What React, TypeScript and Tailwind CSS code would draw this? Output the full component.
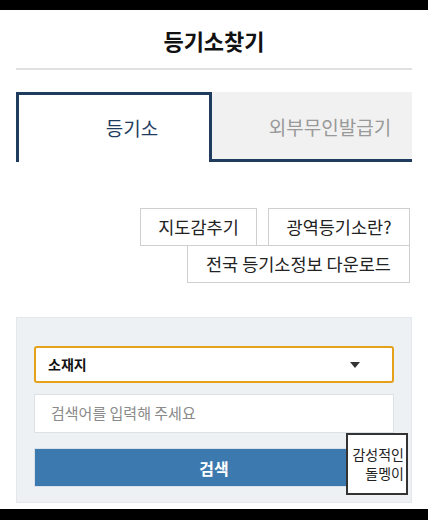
import React from 'react';

const font = { fontFamily: '"Noto Sans CJK KR", "Noto Sans", sans-serif' };

export default function App() {
  const [tab, setTab] = React.useState('office');

  return (
    <div className="w-[428px] h-[520px] bg-white flex flex-col overflow-hidden" style={font}>
      <div className="h-[10px] bg-black shrink-0" />

      {/* Header */}
      <div className="mx-4 h-[60px] flex items-center justify-center pt-[3px] border-b-2 border-[#e0e0e0]">
        <h1 className="text-[22px] font-bold text-[#111]">등기소찾기</h1>
      </div>

      {/* Tabs */}
      <div className="mx-4 mt-[22px] flex h-[70px]">
        <button
          onClick={() => setTab('office')}
          className="w-[196px] h-full border-t-[3px] border-l-[3px] border-r-[3px] border-[#1f3c5e] bg-white flex items-center justify-center pl-9 text-[19px] text-[#1f3c5e]"
        >
          등기소
        </button>
        <button
          onClick={() => setTab('kiosk')}
          className="flex-1 h-full bg-[#f1f1f1] border-b-[3px] border-[#1f3c5e] flex items-center justify-center pl-9 pt-[3px] text-[19px] text-[#999]"
        >
          외부무인발급기
        </button>
      </div>

      {/* Action buttons */}
      <div className="mt-[46px] mr-[18px] flex flex-col items-end">
        <div className="flex gap-[11px]">
          <button className="h-[38px] w-[117px] border border-[#cfcfcf] text-[17.5px] text-[#222] flex items-center justify-center">
            지도감추기
          </button>
          <button className="h-[38px] w-[142px] border border-[#cfcfcf] text-[17.5px] text-[#222] flex items-center justify-center">
            광역등기소란?
          </button>
        </div>
        <button className="-mt-px h-[38px] w-[223px] border border-[#cfcfcf] text-[17.5px] text-[#222] flex items-center justify-center">
          전국 등기소정보 다운로드
        </button>
      </div>

      {/* Search panel */}
      <div className="relative mx-4 mt-[34px] h-[186px] bg-[#edf1f4] border border-[#e4e8ec] px-[17px] pt-[28px]">
        <div className="h-[37px] bg-white border-2 border-[#e5a11a] rounded-[3px] flex items-center justify-between pl-3 pr-8">
          <span className="text-[14px] font-bold text-[#111]">소재지</span>
          <svg width="10" height="6" viewBox="0 0 10 6">
            <path d="M0 0h10L5 6z" fill="#333" />
          </svg>
        </div>
        <div className="mt-[11px] h-[39px] bg-white border border-[#dde2e7] flex items-center pl-4">
          <span className="text-[15px] text-[#8a8a8a]">검색어를 입력해 주세요</span>
        </div>
        <button className="mt-[15px] w-full h-[39px] bg-[#3b79ae] border border-[#d8e1ea] text-white text-[16px] font-bold flex items-center justify-center">
          검색
        </button>

        <div className="absolute left-[329px] top-[115px] w-[62px] h-[62px] bg-white border-2 border-[#333] flex flex-col items-end justify-center pr-[2px] text-[14px] leading-[19px] text-[#222]">
          <span>감성적인</span>
          <span>돌멩이</span>
        </div>
      </div>

      <div className="mt-auto h-[11px] bg-black shrink-0" />
    </div>
  );
}
